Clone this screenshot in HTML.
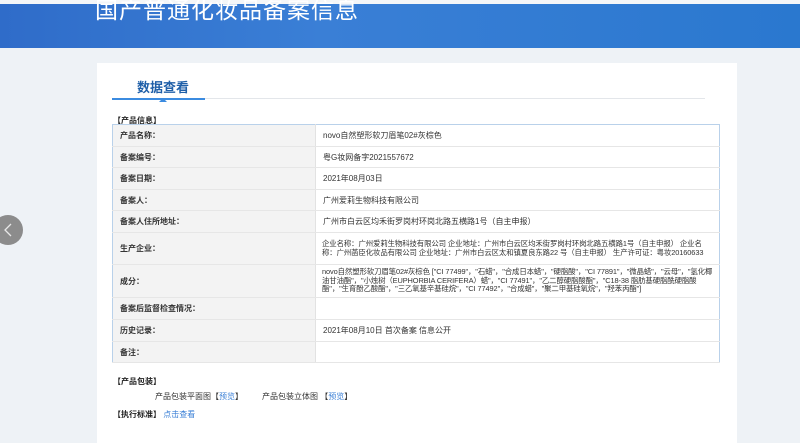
<html><head><style>
body{margin:0;width:800px;height:428px;overflow:hidden;background:#eef2f6;font-family:"Liberation Sans","Noto Sans CJK SC",sans-serif;position:relative}
.hd{position:absolute;left:0;top:4px;width:800px;height:44px;background:linear-gradient(90deg,#2f6cc9,#3a7fd6 40%,#2a78cf);}
.hd .t{position:absolute;left:95px;top:-13px;font-size:23px;color:#fff;letter-spacing:1px}
.top{position:absolute;left:0;top:0;width:800px;height:4px;background:#f4f6f8}
.panel{position:absolute;left:97px;top:63px;width:640px;height:380px;background:#fff}
.tab{position:absolute;left:40px;top:14px;font-size:13px;color:#1f5fa8;font-weight:bold}
.tl{position:absolute;left:15px;top:35px;width:593px;height:1px;background:#e3e6ea}
.tl2{position:absolute;left:15px;top:35px;width:93px;height:2px;background:#3b8be0}
.tri{position:absolute;left:62px;top:31px;border:4px solid transparent;border-bottom:4px solid #3b8be0;width:0;height:0}
.sec{position:absolute;font-size:8px;font-weight:bold;color:#222}
table{position:absolute;left:112px;top:124px;width:608px;border-collapse:collapse;border:1px solid #b9d1ea;font-size:8px;color:#333;table-layout:fixed}
td{border-bottom:1px solid #e6e6e6;padding:0 7px;vertical-align:middle;line-height:9px;overflow:hidden}
td.l{width:188px;background:#f3f3f3;font-weight:bold;color:#333;border-right:1px solid #e2e2e2}
td.s{font-size:7.4px;line-height:8.5px;padding:0 6px;letter-spacing:-0.1px}
.circ{position:absolute;left:-7px;top:215px;width:30px;height:30px;border-radius:50%;background:#8c8c8c}
.circ svg{position:absolute;left:11px;top:8px}
a{color:#3a7fd6;text-decoration:none}
</style></head><body>
<div class="top"></div>
<div class="hd"><div class="t">国产普通化妆品备案信息</div></div>
<div class="panel">
<div class="tab">数据查看</div><div class="tl"></div><div class="tl2"></div><div class="tri"></div>
</div>
<div class="sec" style="left:113px;top:115px">【产品信息】</div>
<table>
<tr style="height:22px"><td class="l">产品名称：</td><td>novo自然塑形软刀眉笔02#灰棕色</td></tr>
<tr style="height:21px"><td class="l">备案编号：</td><td>粤G妆网备字2021557672</td></tr>
<tr style="height:22px"><td class="l">备案日期：</td><td>2021年08月03日</td></tr>
<tr style="height:21px"><td class="l">备案人：</td><td>广州爱莉生物科技有限公司</td></tr>
<tr style="height:22px"><td class="l">备案人住所地址：</td><td>广州市白云区均禾街罗岗村环岗北路五横路1号（自主申报）</td></tr>
<tr style="height:32px"><td class="l">生产企业：</td><td class="s">企业名称：广州爱莉生物科技有限公司 企业地址：广州市白云区均禾街罗岗村环岗北路五横路1号（自主申报） 企业名称：广州菡臣化妆品有限公司 企业地址：广州市白云区太和镇夏良东路22 号（自主申报） 生产许可证：粤妆20160633</td></tr>
<tr style="height:33px"><td class="l">成分：</td><td class="s">novo自然塑形软刀眉笔02#灰棕色 ["CI 77499"，"石蜡"，"合成日本蜡"，"硬脂酸"，"CI 77891"，"微晶蜡"，"云母"，"氢化椰油甘油酯"，"小烛树（EUPHORBIA CERIFERA）蜡"，"CI 77491"，"乙二醇硬脂酸酯"，"C18-38 脂肪基硬脂酰硬脂酸酯"，"生育酚乙酸酯"，"三乙氧基辛基硅烷"，"CI 77492"，"合成蜡"，"聚二甲基硅氧烷"，"羟苯丙酯"]</td></tr>
<tr style="height:22px"><td class="l">备案后监督检查情况：</td><td></td></tr>
<tr style="height:22px"><td class="l">历史记录：</td><td>2021年08月10日 首次备案 信息公开</td></tr>
<tr style="height:21px"><td class="l">备注：</td><td></td></tr>
</table>
<div class="sec" style="left:113px;top:376px">【产品包装】</div>
<div style="position:absolute;left:155px;top:391px;font-size:8px;color:#333">产品包装平面图【<a>预览</a>】</div>
<div style="position:absolute;left:262px;top:391px;font-size:8px;color:#333">产品包装立体图 【<a>预览</a>】</div>
<div class="sec" style="left:113px;top:409px">【执行标准】 <a style="font-weight:normal">点击查看</a></div>
<div class="circ"><svg width="8" height="14"><path d="M7 1 L1 7 L7 13" stroke="#e8e8e8" stroke-width="1.3" fill="none"/></svg></div>
</body></html>
